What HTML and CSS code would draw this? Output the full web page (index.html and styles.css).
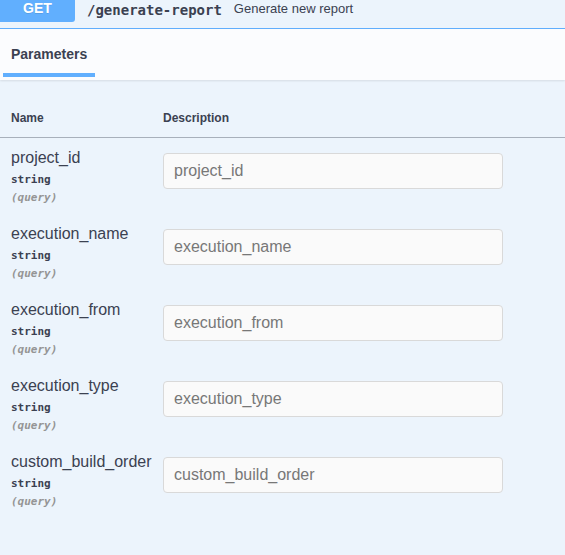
FILE: index.html
```html
<!DOCTYPE html>
<html>
<head>
<meta charset="utf-8">
<link rel="stylesheet" href="styles.css">
</head>
<body>
<div class="opblock">
  <div class="summary">
    <span class="method">GET</span>
    <span class="path">/generate-report</span>
    <span class="desc">Generate new report</span>
  </div>
  <div class="section-header">
    <div class="tab">Parameters</div>
  </div>
  <div class="params">
    <div class="thead">
      <div class="col-name">Name</div>
      <div class="col-desc">Description</div>
    </div>
    <div class="row">
      <div class="col-name">
        <div class="pname">project_id</div>
        <div class="ptype">string</div>
        <div class="pin">(query)</div>
      </div>
      <div class="col-desc"><input class="field" type="text" placeholder="project_id"></div>
    </div>
    <div class="row">
      <div class="col-name">
        <div class="pname">execution_name</div>
        <div class="ptype">string</div>
        <div class="pin">(query)</div>
      </div>
      <div class="col-desc"><input class="field" type="text" placeholder="execution_name"></div>
    </div>
    <div class="row">
      <div class="col-name">
        <div class="pname">execution_from</div>
        <div class="ptype">string</div>
        <div class="pin">(query)</div>
      </div>
      <div class="col-desc"><input class="field" type="text" placeholder="execution_from"></div>
    </div>
    <div class="row">
      <div class="col-name">
        <div class="pname">execution_type</div>
        <div class="ptype">string</div>
        <div class="pin">(query)</div>
      </div>
      <div class="col-desc"><input class="field" type="text" placeholder="execution_type"></div>
    </div>
    <div class="row">
      <div class="col-name">
        <div class="pname">custom_build_order</div>
        <div class="ptype">string</div>
        <div class="pin">(query)</div>
      </div>
      <div class="col-desc"><input class="field" type="text" placeholder="custom_build_order"></div>
    </div>
  </div>
</div>
</body>
</html>
```

FILE: styles.css
```css
* { box-sizing: border-box; }
html, body {
  margin: 0;
  padding: 0;
  background: #ecf4fc;
  font-family: "Liberation Sans", Arial, sans-serif;
  color: #3b4151;
}
.opblock {
  width: 565px;
  height: 555px;
  background: #ecf4fc;
  overflow: hidden;
}
.summary {
  height: 29px;
  display: flex;
  align-items: flex-start;
  border-bottom: 1px solid #61affe;
}
.method {
  width: 75px;
  height: 22px;
  background: #61affe;
  color: #fff;
  font-weight: bold;
  font-size: 14px;
  line-height: 16px;
  text-align: center;
  border-bottom-right-radius: 3px;
  text-shadow: 0 1px 0 rgba(0,0,0,.1);
}
.path {
  margin-left: 12px;
  font-family: "DejaVu Sans Mono", "Liberation Mono", monospace;
  font-weight: bold;
  font-size: 14px;
  line-height: 20px;
  color: #3b4151;
}
.desc {
  margin-left: 12px;
  font-size: 13px;
  line-height: 17px;
}
.section-header {
  height: 51px;
  background: #fbfcfe;
  box-shadow: 0 1px 2px rgba(0,0,0,.1);
  display: flex;
  position: relative;
}
.tab {
  margin-left: 3px;
  padding: 17px 8px 0 8px;
  font-size: 14px;
  font-weight: bold;
  line-height: 16px;
  height: 48px;
  border-bottom: 4px solid #61affe;
  align-self: flex-start;
}
.params {
  padding-top: 31px;
}
.thead {
  display: flex;
  height: 27px;
  border-bottom: 1px solid #a8b0bb;
  font-size: 12px;
  font-weight: bold;
  line-height: 15px;
}
.col-name {
  width: 163px;
  padding-left: 11px;
  flex: none;
}
.col-desc {
  flex: 1;
}
.row {
  display: flex;
  height: 76px;
  padding-top: 10px;
}
.pname {
  font-size: 16px;
  line-height: 20px;
  white-space: nowrap;
}
.ptype {
  margin-top: 3px;
  font-family: "DejaVu Sans Mono", "Liberation Mono", monospace;
  font-weight: bold;
  font-size: 11px;
  line-height: 18px;
}
.pin {
  font-family: "DejaVu Sans Mono", "Liberation Mono", monospace;
  font-style: italic;
  font-weight: bold;
  font-size: 11px;
  line-height: 18px;
  color: #959595;
}
.field {
  display: block;
  margin-top: 5px;
  width: 340px;
  height: 36px;
  padding: 0 10px;
  border: 1px solid #d9d9d9;
  border-radius: 4px;
  background: #fafafa;
  font-family: "Liberation Sans", Arial, sans-serif;
  font-size: 16px;
  color: #3b4151;
  outline: none;
}
.field::placeholder {
  color: #777;
}
```
